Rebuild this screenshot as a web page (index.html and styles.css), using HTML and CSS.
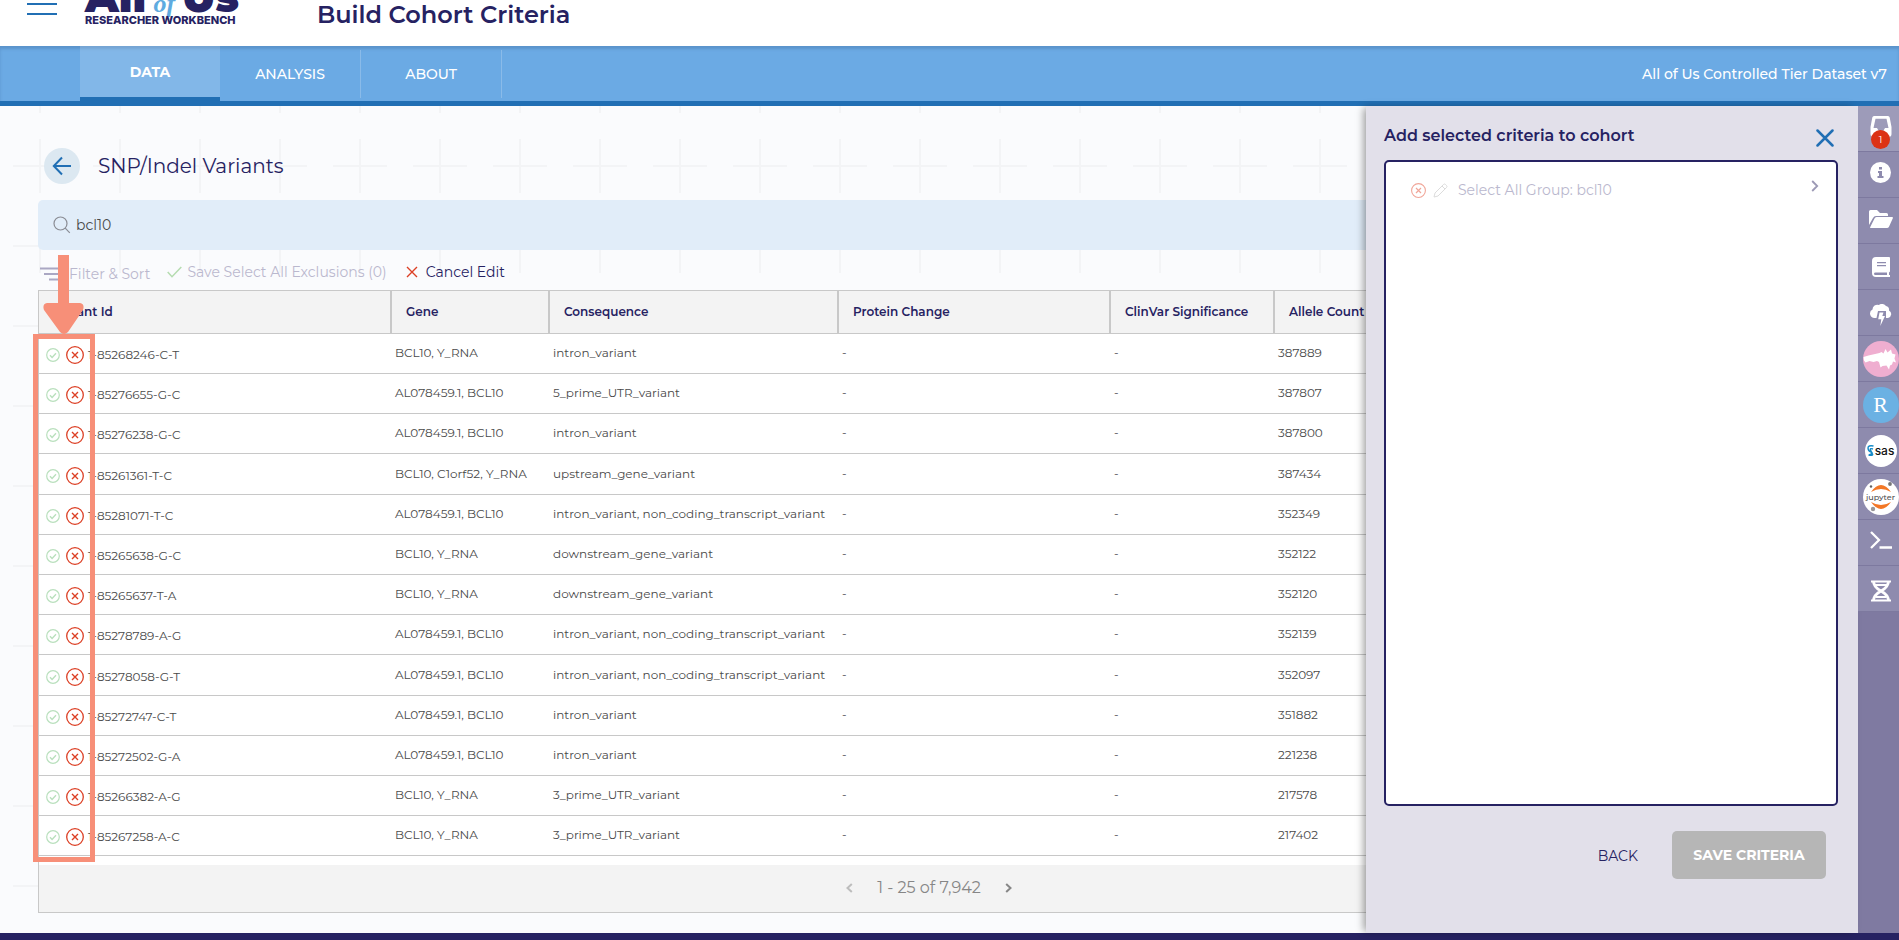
FILE: index.html
```html
<!DOCTYPE html>
<html lang="en">
<head>
<meta charset="utf-8">
<meta name="viewport" content="width=device-width, initial-scale=1">
<title>Build Cohort Criteria</title>
<link rel="stylesheet" href="styles.css">
</head>
<body>
<svg class="sprite" aria-hidden="true">
  <symbol id="ok" viewBox="0 0 14 14"><circle cx="7" cy="7" r="6.300" fill="none" stroke="currentColor" stroke-width="1.200"/><path d="M4 7.300l2.100 2.100L10 5.300" fill="none" stroke="currentColor" stroke-width="1.400"/></symbol>
  <symbol id="no" viewBox="0 0 18 18"><circle cx="9" cy="9" r="8.300" fill="none" stroke="currentColor" stroke-width="1.300"/><path d="M6 6l6 6M12 6l-6 6" fill="none" stroke="currentColor" stroke-width="1.400"/></symbol>
</svg>

<header class="top">
  <button class="menu" aria-label="Menu"><span></span><span></span></button>
  <div class="logo">
    <div class="logo-name"><span>All</span><em>of</em><span>Us</span></div>
    <div class="logo-sub">RESEARCHER WORKBENCH</div>
  </div>
  <h1>Build Cohort Criteria</h1>
</header>

<nav class="tabs">
  <a class="tab active" href="#data">DATA</a>
  <a class="tab" href="#analysis">ANALYSIS</a>
  <a class="tab" href="#about">ABOUT</a>
  <span class="dataset">All of Us Controlled Tier Dataset v7</span>
</nav>

<div class="stage">
  <main class="content">
    <div class="heading">
      <button class="back" aria-label="Back"><svg width="20" height="20" viewBox="0 0 20 20"><path d="M19 10H2M10 1.500L1.800 10l8.200 8.500" fill="none" stroke="currentColor" stroke-width="2"/></svg></button>
      <h2>SNP/Indel Variants</h2>
    </div>
    <label class="search">
      <svg width="18" height="18" viewBox="0 0 18 18"><circle cx="7.500" cy="7.500" r="6.500" fill="none" stroke="currentColor" stroke-width="1.200"/><path d="M12.200 12.200l4.600 4.600" stroke="currentColor" stroke-width="1.200"/></svg>
      <input type="text" value="bcl10" aria-label="Search variants">
    </label>
    <div class="tools">
      <button class="tool filter" disabled><svg width="24" height="14" viewBox="0 0 24 14"><path d="M0 1.500h22M4 7h18M9 12.500h13" stroke="#aaa7c3" stroke-width="2"/></svg>Filter &amp; Sort</button>
      <button class="tool save" disabled><svg width="15" height="12" viewBox="0 0 15 12"><path d="M.7 6l4.300 4.700L14.300 1" fill="none" stroke="#b5dcb0" stroke-width="1.500"/></svg>Save Select All Exclusions (0)</button>
      <button class="tool cancel"><svg width="12" height="12" viewBox="0 0 12 12"><path d="M1 1l10 10M11 1L1 11" stroke="#dc3f24" stroke-width="1.400"/></svg>Cancel Edit</button>
    </div>

    <div class="grid">
      <table>
        <colgroup><col class="c1"><col class="c2"><col class="c3"><col class="c4"><col class="c5"><col></colgroup>
        <thead><tr><th>Variant Id</th><th>Gene</th><th>Consequence</th><th>Protein Change</th><th>ClinVar Significance</th><th>Allele Count</th></tr></thead>
        <tbody>
          <tr><td><div class="vid"><button class="ok" aria-label="Include"><svg><use href="#ok"/></svg></button><button class="no" aria-label="Exclude"><svg><use href="#no"/></svg></button>1-85268246-C-T</div></td><td>BCL10, Y_RNA</td><td>intron_variant</td><td>-</td><td>-</td><td>387889</td></tr>
          <tr><td><div class="vid"><button class="ok" aria-label="Include"><svg><use href="#ok"/></svg></button><button class="no" aria-label="Exclude"><svg><use href="#no"/></svg></button>1-85276655-G-C</div></td><td>AL078459.1, BCL10</td><td>5_prime_UTR_variant</td><td>-</td><td>-</td><td>387807</td></tr>
          <tr><td><div class="vid"><button class="ok" aria-label="Include"><svg><use href="#ok"/></svg></button><button class="no" aria-label="Exclude"><svg><use href="#no"/></svg></button>1-85276238-G-C</div></td><td>AL078459.1, BCL10</td><td>intron_variant</td><td>-</td><td>-</td><td>387800</td></tr>
          <tr><td><div class="vid"><button class="ok" aria-label="Include"><svg><use href="#ok"/></svg></button><button class="no" aria-label="Exclude"><svg><use href="#no"/></svg></button>1-85261361-T-C</div></td><td>BCL10, C1orf52, Y_RNA</td><td>upstream_gene_variant</td><td>-</td><td>-</td><td>387434</td></tr>
          <tr><td><div class="vid"><button class="ok" aria-label="Include"><svg><use href="#ok"/></svg></button><button class="no" aria-label="Exclude"><svg><use href="#no"/></svg></button>1-85281071-T-C</div></td><td>AL078459.1, BCL10</td><td>intron_variant, non_coding_transcript_variant</td><td>-</td><td>-</td><td>352349</td></tr>
          <tr><td><div class="vid"><button class="ok" aria-label="Include"><svg><use href="#ok"/></svg></button><button class="no" aria-label="Exclude"><svg><use href="#no"/></svg></button>1-85265638-G-C</div></td><td>BCL10, Y_RNA</td><td>downstream_gene_variant</td><td>-</td><td>-</td><td>352122</td></tr>
          <tr><td><div class="vid"><button class="ok" aria-label="Include"><svg><use href="#ok"/></svg></button><button class="no" aria-label="Exclude"><svg><use href="#no"/></svg></button>1-85265637-T-A</div></td><td>BCL10, Y_RNA</td><td>downstream_gene_variant</td><td>-</td><td>-</td><td>352120</td></tr>
          <tr><td><div class="vid"><button class="ok" aria-label="Include"><svg><use href="#ok"/></svg></button><button class="no" aria-label="Exclude"><svg><use href="#no"/></svg></button>1-85278789-A-G</div></td><td>AL078459.1, BCL10</td><td>intron_variant, non_coding_transcript_variant</td><td>-</td><td>-</td><td>352139</td></tr>
          <tr><td><div class="vid"><button class="ok" aria-label="Include"><svg><use href="#ok"/></svg></button><button class="no" aria-label="Exclude"><svg><use href="#no"/></svg></button>1-85278058-G-T</div></td><td>AL078459.1, BCL10</td><td>intron_variant, non_coding_transcript_variant</td><td>-</td><td>-</td><td>352097</td></tr>
          <tr><td><div class="vid"><button class="ok" aria-label="Include"><svg><use href="#ok"/></svg></button><button class="no" aria-label="Exclude"><svg><use href="#no"/></svg></button>1-85272747-C-T</div></td><td>AL078459.1, BCL10</td><td>intron_variant</td><td>-</td><td>-</td><td>351882</td></tr>
          <tr><td><div class="vid"><button class="ok" aria-label="Include"><svg><use href="#ok"/></svg></button><button class="no" aria-label="Exclude"><svg><use href="#no"/></svg></button>1-85272502-G-A</div></td><td>AL078459.1, BCL10</td><td>intron_variant</td><td>-</td><td>-</td><td>221238</td></tr>
          <tr><td><div class="vid"><button class="ok" aria-label="Include"><svg><use href="#ok"/></svg></button><button class="no" aria-label="Exclude"><svg><use href="#no"/></svg></button>1-85266382-A-G</div></td><td>BCL10, Y_RNA</td><td>3_prime_UTR_variant</td><td>-</td><td>-</td><td>217578</td></tr>
          <tr><td><div class="vid"><button class="ok" aria-label="Include"><svg><use href="#ok"/></svg></button><button class="no" aria-label="Exclude"><svg><use href="#no"/></svg></button>1-85267258-A-C</div></td><td>BCL10, Y_RNA</td><td>3_prime_UTR_variant</td><td>-</td><td>-</td><td>217402</td></tr>
        </tbody>
      </table>
      <div class="pager">
        <button class="prev" aria-label="Previous page"><svg width="7" height="10" viewBox="0 0 7 10"><path d="M5.800 1L1.500 5l4.300 4" fill="none" stroke="currentColor" stroke-width="2"/></svg></button>
        <span>1 - 25 of 7,942</span>
        <button class="next" aria-label="Next page"><svg width="7" height="10" viewBox="0 0 7 10"><path d="M1.200 1l4.300 4-4.300 4" fill="none" stroke="currentColor" stroke-width="2"/></svg></button>
      </div>
      <div class="callout"></div>
      <svg class="callout-arrow" width="42" height="80" viewBox="0 0 42 80"><path d="M15 0h11v48h11q5 1 3 7L25 77q-4 4-8 0L1 55q-2-6 3-7h11z" fill="#f78f78"/></svg>
    </div>
  </main>

  <aside class="panel">
    <div class="panel-head">
      <h3>Add selected criteria to cohort</h3>
      <button aria-label="Close"><svg width="18" height="18" viewBox="0 0 18 18"><path d="M1.500 1.500l15 15M16.500 1.500l-15 15" stroke="currentColor" stroke-width="2.500" stroke-linecap="round"/></svg></button>
    </div>
    <div class="criteria">
      <div class="criterion">
        <button class="remove" aria-label="Remove"><svg width="15" height="15"><use href="#no"/></svg></button>
        <button class="edit" aria-label="Edit"><svg width="15" height="15" viewBox="0 0 15 15"><path d="M1 14l1-4L10.500 1.500q1-1 2 0l1 1q1 1 0 2L5 13zM9 3l3 3" fill="none" stroke="currentColor"/></svg></button>
        <span>Select All Group: bcl10</span>
        <svg class="chev" width="8" height="12" viewBox="0 0 8 12"><path d="M1.200 1l5 5-5 5" fill="none" stroke="currentColor" stroke-width="1.800"/></svg>
      </div>
    </div>
    <div class="actions">
      <button class="plain">BACK</button>
      <button class="primary" disabled>SAVE CRITERIA</button>
    </div>
  </aside>

  <div class="rail">
    <button class="raised" aria-label="Selected criteria"><svg width="22" height="22" viewBox="0 0 22 22"><path d="M4 0h14q1.300 0 1.700 1.500L21.500 11v7q0 3-3 3h-15q-3 0-3-3v-7L2.300 1.500Q2.700 0 4 0zM5.500 2.800L3.500 12H7l2 3.500h4l2-3.500h3.500l-2-9.200z" fill="#fff" fill-rule="evenodd"/></svg><b class="badge">1</b></button>
    <button class="raised" aria-label="Help"><svg width="21" height="21" viewBox="0 0 21 21"><circle cx="10.500" cy="10.500" r="10.500" fill="#fff"/><path d="M9 5h3v2.600H9zM8 9h4v5h1.500v2h-6v-2H9v-3H8z" fill="#8e8bae"/></svg></button>
    <button class="raised" aria-label="Files"><svg width="24" height="20" viewBox="0 0 24 20"><path d="M0 16V2.500Q0 1 1.500 1H8l3 3h6.500Q19 4 19 5.500V7H7Q5 7 4 9z" fill="#fff"/><path d="M1 18.500L5.500 9.500Q6 8 7.500 8H23q1.500 0 .7 1.500L20 17.700q-.7 1.300-2 1.300H1.500z" fill="#fff"/></svg></button>
    <button aria-label="Data dictionary"><svg width="18" height="20" viewBox="0 0 18 20"><path d="M4 0h13q1 0 1 1v13.500l-1 1V18h1v2H4q-4 0-4-4V4Q0 0 4 0zM5 5v1.300h9V5zM5 8v1.300h9V8zM3.500 15.500q-1.500 0-1.500 1.300T3.500 18H15v-2.500z" fill="#fff" fill-rule="evenodd"/></svg></button>
    <button class="lowered" aria-label="Cloud environment"><svg width="22" height="23" viewBox="0 0 22 23"><path d="M4.500 14A4.500 4.500 0 0 1 2.500 5.500 4.800 4.800 0 0 1 9 1a4.800 4.800 0 0 1 7 1 4 4 0 0 1 3 4.500 4 4 0 0 1-1 7.500h-2V7H8L6.500 14z" fill="#fff"/><path d="M9.500 8.500h4L12.300 12H15l-4.700 10 1-6.800H8.200z" fill="#fff"/></svg></button>
    <button aria-label="Hail"><svg width="36" height="36" viewBox="0 0 36 36"><circle cx="18" cy="18" r="18" fill="#efaed0"/><path d="M.5 16l5-1.500 11-2.500 2-1 2 1.500 2-4.500 2 3.500 3.500-3 1 4 3.500 1-1 4 1.500 4-3-1-1 3-2 1-1 4-2.500-4-4 .5-2 1.500-1.500-5.500-2-1-3.500 1-4-1-4 1.500-1.500-2z" fill="#fff"/></svg></button>
    <button aria-label="RStudio"><span class="disc rstudio">R</span></button>
    <button aria-label="SAS"><span class="disc sas"><svg width="7" height="11" viewBox="0 0 7 11"><path d="M6.500 1Q1 0 1 3t3 4-2 3M6 4Q2.500 3 3.500 5t2 4-4 1" fill="none" stroke="#168bc8" stroke-width="1.400"/></svg>sas</span></button>
    <button aria-label="Jupyter"><span class="disc jupyter"><svg width="36" height="36" viewBox="0 0 36 36"><path d="M8 13q10-14 20 0-10-6-20 0zM8 23q10 14 20 0-10 6-20 0z" fill="#f37726"/><circle cx="8" cy="7.500" r="1.200" fill="#616161"/><circle cx="27" cy="5" r="1.900" fill="#767677"/><circle cx="10" cy="30" r="2.200" fill="#989798"/></svg><i>jupyter</i></span></button>
    <button class="term" aria-label="Terminal"><svg width="22" height="18" viewBox="0 0 22 18"><path d="M1 1l8 8-8 8M9.500 16.500H22" fill="none" stroke="#fff" stroke-width="2.300"/></svg></button>
    <button class="lowered" aria-label="Genomic extraction"><svg width="20" height="22" viewBox="0 0 20 22"><path d="M2.500 1q0 6 7.500 10t7.500 10M17.500 1q0 6-7.500 10T2.500 21" fill="none" stroke="#fff" stroke-width="2.800"/><path d="M0 1.500h20M4 5h12M5 17h10M0 20.500h20" stroke="#fff" stroke-width="2.200"/></svg></button>
  </div>
</div>
<footer class="bottom"></footer>
</body>
</html>
```

FILE: styles.css
```css
* { box-sizing: border-box; }

body {
  margin: 0;
  height: 100vh;
  display: flex;
  flex-direction: column;
  overflow: hidden;
  font-family: Montserrat, Inter, "Open Sans", sans-serif;
  font-size: 14px;
  color: #262262;
  background: #fff;
}

button {
  display: inline-flex;
  align-items: center;
  justify-content: center;
  padding: 0;
  border: 0;
  background: none;
  font: inherit;
  color: inherit;
}

h1, h2, h3 { margin: 0; }

.sprite { position: absolute; width: 0; height: 0; }

/* Header */
.top {
  flex: none;
  height: 46px;
  display: flex;
  align-items: flex-end;
  overflow: hidden;
  padding-left: 27px;
}

.menu {
  width: 30px;
  flex-direction: column;
  gap: 8px;
  padding-bottom: 31px;
}

.menu span { width: 30px; height: 2px; background: #216fb4; }

.logo { width: 154px; margin-left: 28px; padding-bottom: 20px; }

.logo-name {
  display: flex;
  align-items: baseline;
  justify-content: space-between;
  font-size: 42px;
  font-weight: 900;
  line-height: 20px;
}

.logo-name em {
  font-family: "Liberation Serif", serif;
  font-size: 26px;
  font-weight: 700;
  color: #5fabe0;
}

.logo-sub {
  font-family: Inter, sans-serif;
  font-size: 11px;
  font-weight: 800;
  line-height: 12px;
  white-space: nowrap;
}

.top h1 {
  margin-left: 78px;
  padding-bottom: 16px;
  font-size: 24px;
  font-weight: 600;
  line-height: 30px;
}

/* Tabs */
.tabs {
  flex: none;
  height: 60px;
  display: flex;
  align-items: center;
  padding: 0 12px 0 80px;
  background: #6baae4;
  border-bottom: 5px solid #216fb4;
  box-shadow: inset 0 3px 3px rgba(38, 70, 120, .22);
  color: #fff;
  font-weight: 500;
}

.tab {
  width: 141px;
  height: 48px;
  display: flex;
  align-items: center;
  justify-content: center;
  border-right: 1px solid #8abbe9;
  color: inherit;
  text-decoration: none;
}

.tab.active {
  width: 140px;
  height: 55px;
  border-right: 0;
  border-bottom: 4px solid #216fb4;
  background: rgba(255, 255, 255, .16);
  font-weight: 700;
}

.dataset { margin-left: auto; }

/* Main area */
.stage { position: relative; flex: 1; min-height: 0; display: flex; }

.content {
  flex: 1;
  min-width: 0;
  padding: 42px 38px 0;
  background: #fafbfd url("data:image/svg+xml,%3Csvg xmlns='http://www.w3.org/2000/svg' width='80' height='80'%3E%3Cpath d='M40 13v54M13 40h54' stroke='%23f3f4f6' stroke-width='2'/%3E%3C/svg%3E") 0 20px;
}

.heading { display: flex; align-items: center; gap: 18px; padding-left: 6px; }

.back { width: 36px; height: 36px; border-radius: 50%; background: #dce8f1; color: #216fb4; }

.heading h2 { font-size: 20px; font-weight: 400; line-height: 24px; }

.search {
  height: 50px;
  margin-top: 16px;
  padding: 0 15px;
  display: flex;
  align-items: center;
  gap: 5px;
  border-radius: 5px;
  background: #e1edf9;
  color: #8a8c94;
}

.search input {
  flex: 1;
  padding: 0;
  border: 0;
  outline: 0;
  background: none;
  font: inherit;
  color: #4a4a4a;
}

.tools {
  height: 40px;
  display: flex;
  align-items: center;
  gap: 17px;
  padding-top: 4px;
  padding-left: 2px;
}

.tool { gap: 5px; white-space: nowrap; font-weight: 400; }
.tool:disabled { color: #bab8ce; }
.filter { padding-top: 4px; }
.cancel { gap: 8px; padding-left: 2px; }

/* Variant table */
.grid { position: relative; border: 1px solid #c8c8c8; background: #fff; }

table { width: 100%; table-layout: fixed; border-collapse: separate; border-spacing: 0; }

.c1 { width: 353px; }
.c2 { width: 158px; }
.c3 { width: 289px; }
.c4 { width: 272px; }
.c5 { width: 164px; }

th {
  height: 43px;
  padding: 0 14px 2px;
  background: #f3f3f3;
  border-right: 2px solid #c8c8c8;
  border-bottom: 1px solid #c8c8c8;
  font-size: 12px;
  font-weight: 600;
  text-align: left;
  white-space: nowrap;
}

th:last-child { border-right: 0; }

td {
  height: 40px;
  padding: 0 3px 2px;
  border-bottom: 1px solid #c8c8c8;
  font-size: 12px;
  color: #4a4a4a;
  white-space: nowrap;
}

tbody tr:nth-child(5n+4) td { height: 41px; }

.vid { display: flex; align-items: center; padding: 4px 0 0 4px; }
.vid button { padding-top: 1px; }
.ok { margin-right: 6px; color: #b9e0bd; }
.ok svg { width: 14px; height: 14px; }
.no { margin-right: 4px; color: #dc3f24; }
.no svg { width: 18px; height: 18px; }

.pager {
  height: 47px;
  margin-top: 9px;
  display: flex;
  align-items: center;
  justify-content: center;
  gap: 24px;
  padding-bottom: 2px;
  background: #f3f3f3;
  color: #868686;
  font-size: 16px;
}

.prev { color: #bdbdbd; }

/* Highlight drawn over the include / exclude column */
.callout {
  position: absolute;
  top: 43px;
  left: -6px;
  width: 62px;
  height: 528px;
  border: 5px solid #f78f78;
}

.callout-arrow { position: absolute; top: -36px; left: 4px; }

/* Side panel */
.panel {
  position: absolute;
  top: 0;
  right: 41px;
  bottom: 0;
  width: 492px;
  padding: 16px 20px 54px 18px;
  display: flex;
  flex-direction: column;
  background: #e2e0ea;
  box-shadow: -4px 0 8px -2px rgba(0, 0, 0, .4);
}

.panel-head { display: flex; justify-content: space-between; height: 38px; padding-right: 4px; }
.panel-head h3 { font-size: 16px; font-weight: 600; line-height: 28px; }
.panel-head button { height: 30px; padding-top: 2px; color: #216fb4; }

.criteria {
  flex: 1;
  padding: 17px 17px 17px 25px;
  border: 2px solid #262262;
  border-radius: 5px;
  background: #fff;
}

.criterion { display: flex; align-items: center; gap: 7px; height: 22px; color: #bab8ce; }
.criterion span { margin-left: 3px; }
.remove { color: #f0a598; }
.edit { color: #dcdcdc; }
.chev { margin: 0 0 8px auto; color: #9c99b5; }

.actions { display: flex; justify-content: flex-end; gap: 34px; padding: 25px 12px 0 0; }
.plain { font-weight: 400; padding-top: 2px; }

.primary {
  width: 154px;
  height: 48px;
  border-radius: 5px;
  background: #b6b6b6;
  color: #fff;
  font-weight: 700;
}

/* Icon rail */
.rail { width: 41px; background: #7f7aa1; }

.rail button {
  position: relative;
  width: 100%;
  height: 46px;
  padding-left: 4px;
  display: flex;
  border-bottom: 1px solid #7d799f;
  background: #8e8bae;
}

.rail button:first-child { background: #9d9bb9; }
.rail .raised { padding-bottom: 4px; }
.rail .lowered { padding-top: 5px; }
.rail .term { padding-bottom: 5px; }

.badge {
  position: absolute;
  left: 13px;
  bottom: 2px;
  width: 19px;
  height: 19px;
  border-radius: 50%;
  background: #dc3214;
  color: #fff;
  font-size: 10px;
  font-weight: 400;
  line-height: 20px;
  text-align: center;
}

.disc {
  position: relative;
  flex: none;
  width: 36px;
  height: 36px;
  display: flex;
  align-items: center;
  justify-content: center;
  border-radius: 50%;
  background: #fff;
}

.rstudio { background: #6bb1e3; color: #fff; font: 22px/34px "Liberation Serif", serif; }
.sas { width: 32px; height: 32px; gap: 1px; color: #111; font: 500 12px/16px Inter, sans-serif; }
.jupyter svg { position: absolute; }
.jupyter i { color: #4e4e4e; font-size: 8px; font-weight: 500; font-style: normal; }

.bottom { flex: none; height: 7px; background: #262262; }
```
